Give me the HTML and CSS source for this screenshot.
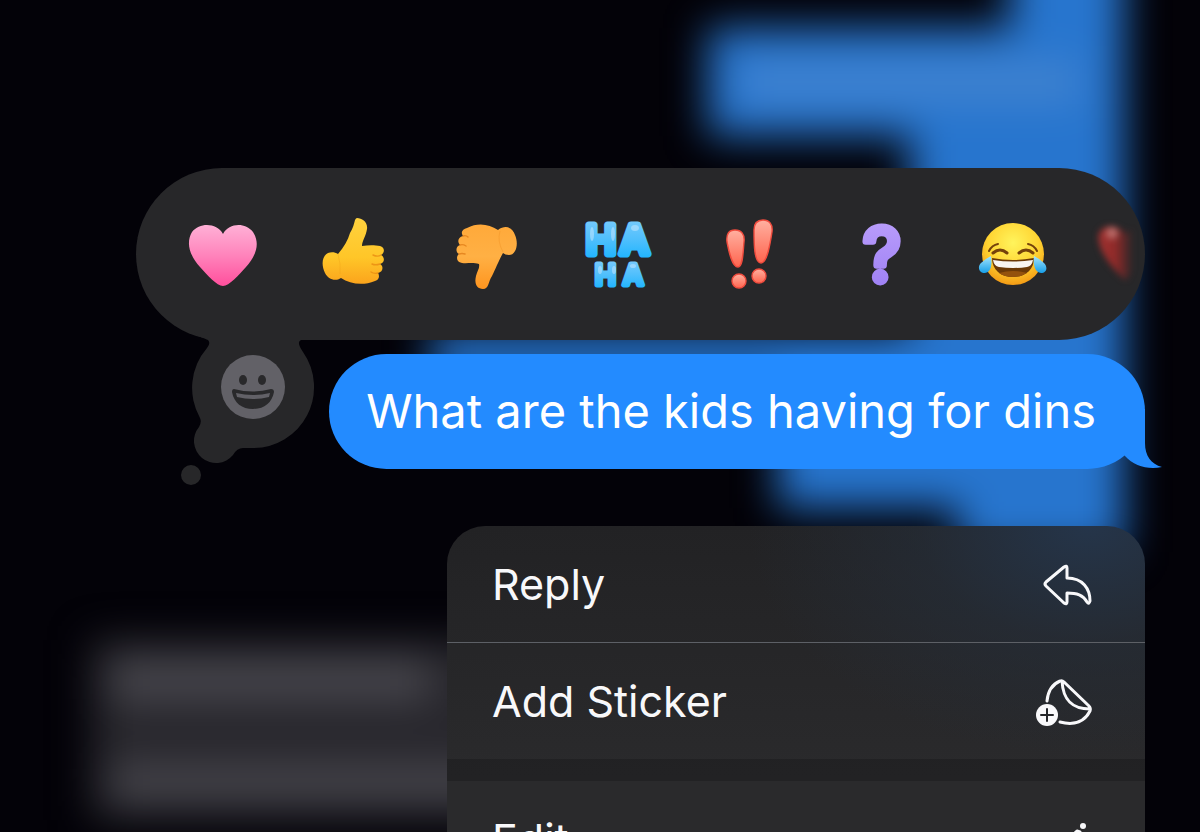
FILE: index.html
```html
<!DOCTYPE html>
<html lang="en">
<head>
    <meta charset="UTF-8">
    <meta name="viewport" content="width=device-width, initial-scale=1">
    <title>Messages</title>
    <link rel="stylesheet" href="styles.css">
</head>

<body>

<!-- Blurred conversation behind the overlay -->
<svg class="backdrop" viewBox="0 0 1200 832" preserveAspectRatio="xMaxYMin slice" aria-hidden="true">
    <defs>
        <filter id="blur" x="-20%" y="-20%" width="140%" height="140%" color-interpolation-filters="sRGB"><feGaussianBlur stdDeviation="20"/></filter>
    </defs>
    <g filter="url(#blur)">
        <path fill="#2775ce" d="M1010-80H1124V552H958V508H778V380H430V332H910V136H708V28H1010Z"/>
        <path fill="#3f82d0" d="M740 60H1080V104H740Z"/>
        <path fill="#28272d" d="M92 640H560V820H92Z"/>
        <path fill="#48474e" d="M110 660H430V700H110ZM110 766H520V800H110Z"/>
    </g>
</svg>

<main class="overlay">

    <!-- Reactions -->
    <section class="reactions" aria-label="Reactions">
        <div class="reaction-bar">
            <button type="button" class="reaction" aria-label="Heart">
                <svg viewBox="0 0 72 72">
                    <defs>
                        <linearGradient id="pink" x1="0" y1="0" x2="0" y2="1"><stop offset="0" stop-color="#ffb0d6"/><stop offset=".5" stop-color="#ff83bb"/><stop offset="1" stop-color="#ff4f9c"/></linearGradient>
                    </defs>
                    <path fill="url(#pink)" d="M37 16C43 5 59 4 67 14C75 26 69 39 60 49C53 57 43 68 37 68C31 68 21 57 14 49C5 39-1 26 6 14C14 4 31 5 37 16Z"/>
                </svg>
            </button>
            <button type="button" class="reaction" aria-label="Thumbs up">
                <svg viewBox="0 0 72 72">
                    <defs>
                        <linearGradient id="yellow" x1="0" y1="0" x2="0" y2="1"><stop offset="0" stop-color="#ffd23e"/><stop offset=".6" stop-color="#ffc628"/><stop offset="1" stop-color="#fba41c"/></linearGradient>
                    </defs>
                    <path fill="url(#yellow)" d="M39 0C44 0 50 4 49 11C48 18 44 23 44 28C50 27 57 27 62 28C67 29 67 35 63 37C67 39 67 45 62 46C66 48 65 54 60 55C62 58 61 62 57 63C45 68 32 66 23 60C17 64 10 61 7 55C3 47 4 38 10 35C13 34 17 34 20 36C26 29 30 22 32 15C35 10 36 6 37 2Q38 0 39 0Z"/>
                    <path fill="none" stroke="#e98b12" stroke-width="1.4" stroke-linecap="round" opacity=".8" d="M63 37C60 39 57 38 55 37M62 46C59 47 56 47 54 46M60 55Q56 56 53 54"/>
                    <path fill="none" stroke="#e99b18" stroke-width="1" opacity=".3" d="M20 36Q23 46 22 56"/>
                </svg>
            </button>
            <button type="button" class="reaction" aria-label="Thumbs down">
                <svg viewBox="0 0 72 72">
                    <defs>
                        <linearGradient id="orange" x1="0" y1="0" x2="0" y2="1"><stop offset="0" stop-color="#ffa93a"/><stop offset=".5" stop-color="#ffb044"/><stop offset="1" stop-color="#ff951f"/></linearGradient>
                    </defs>
                    <path fill="url(#orange)" d="M48 12C56 6 63 10 65 17C69 26 66 37 59 37Q55 37 53 35C48 44 46 50 42 58C38 64 39 71 33 71C27 71 24 66 26 58C27 53 30 50 29 46C22 44 17 46 12 45C6 44 6 38 9 36C5 34 6 28 10 27C7 24 8 19 13 18C10 14 13 11 17 10C28 4 39 6 48 12Z"/>
                    <path fill="none" stroke="#dd7813" stroke-width="1.4" stroke-linecap="round" opacity=".7" d="M13 18Q16 17 18 19M10 27Q13 26 16 28M9 36Q12 35 15 36"/>
                    <path fill="none" stroke="#e98517" stroke-width="1" opacity=".3" d="M50 13Q47 23 53 34"/>
                </svg>
            </button>
            <button type="button" class="reaction" aria-label="Haha">
                <svg viewBox="0 0 72 72">
                    <defs>
                        <linearGradient id="cyan" x1="0" y1="0" x2="0" y2="1"><stop offset="0" stop-color="#7fcdfd"/><stop offset=".5" stop-color="#4fbffc"/><stop offset="1" stop-color="#12b2ff"/></linearGradient>
                    </defs>
                    <g class="haha">
                        <text class="haha-big" x="4 38" y="36">HA</text>
                        <text class="haha-small" x="13 41" y="67">HA</text>
                    </g>
                    <g fill="#cdeaff" opacity=".5">
                        <ellipse cx="10" cy="16" rx="2" ry="7"/>
                        <ellipse cx="31" cy="16" rx="2" ry="7"/>
                        <ellipse cx="53" cy="10" rx="4" ry="3"/>
                        <ellipse cx="18" cy="52" rx="2" ry="4"/>
                        <ellipse cx="32" cy="52" rx="2" ry="4"/>
                        <ellipse cx="51" cy="48" rx="3" ry="2"/>
                    </g>
                </svg>
            </button>
            <button type="button" class="reaction" aria-label="Emphasize">
                <svg viewBox="0 0 72 72">
                    <defs>
                        <linearGradient id="coral" x1="0" y1="0" x2="0" y2="1"><stop offset="0" stop-color="#ffb0a0"/><stop offset="1" stop-color="#ff654f"/></linearGradient>
                    </defs>
                    <g fill="url(#coral)" stroke="#f04c3e" stroke-width="1.4">
                        <path d="M21 12C27 12 31 16 30 24C29 34 29 49 24 49C18 49 15 34 13 24C12 16 15 12 21 12Z"/>
                        <path d="M49 2C55 2 59 6 58 14C56 27 53 45 47 45C40 45 40 25 40 12C40 6 43 2 49 2Z"/>
                        <circle cx="25" cy="63" r="7"/>
                        <circle cx="45" cy="58" r="7"/>
                    </g>
                </svg>
            </button>
            <button type="button" class="reaction" aria-label="Question">
                <svg viewBox="0 0 72 72">
                    <defs>
                        <linearGradient id="violet" x1="0" y1="0" x2="0" y2="1"><stop offset="0" stop-color="#bda1fc"/><stop offset="1" stop-color="#9a7cf3"/></linearGradient>
                    </defs>
                    <text class="question" x="36" y="64" text-anchor="middle">?</text>
                </svg>
            </button>
            <button type="button" class="reaction" aria-label="Tears of joy">
                <svg viewBox="2 0 72 72">
                    <defs>
                        <radialGradient id="face" cx=".5" cy=".32" r=".68"><stop offset="0" stop-color="#fff45c"/><stop offset=".6" stop-color="#ffd432"/><stop offset="1" stop-color="#f39b15"/></radialGradient>
                        <linearGradient id="tear" x1="0" y1="0" x2="0" y2="1"><stop offset="0" stop-color="#a6e6ff"/><stop offset="1" stop-color="#179fe8"/></linearGradient>
                    </defs>
                    <circle cx="37" cy="36" r="31" fill="url(#face)"/>
                    <g fill="none" stroke="#75420b" stroke-linecap="round">
                        <path d="M13 33Q16 27 22 26M61 33Q58 27 52 26" stroke-width="2"/>
                        <path d="M17 35Q24 29 31 35M43 35Q50 29 57 35" stroke-width="3"/>
                    </g>
                    <path fill="#6a3908" d="M16 40Q37 44 58 40C58 52 49 59 37 59C25 59 16 52 16 40Z"/>
                    <path fill="#f8f5f2" d="M17 42Q37 45 57 42Q56 48 51 49Q37 51 23 49Q18 48 17 42Z"/>
                    <path fill="#94520d" d="M23 55Q37 51 51 55Q45 59 37 59Q28 59 23 55Z"/>
                    <path fill="url(#tear)" d="M15 38C16 45 16 54 9 55C3 55 1 49 5 45Q9 41 15 38ZM58 38C57 45 58 54 65 55C71 55 72 49 68 45Q64 41 58 38Z"/>
                </svg>
            </button>
            <button type="button" class="reaction" aria-label="Red heart">
                <svg viewBox="0 0 72 72">
                    <defs>
                        <filter id="soft" x="-30%" y="-30%" width="160%" height="160%" color-interpolation-filters="sRGB"><feGaussianBlur stdDeviation="3"/></filter>
                        <linearGradient id="red" x1="0" y1="0" x2="1" y2="0"><stop offset="0" stop-color="#a03230"/><stop offset=".5" stop-color="#902a29"/><stop offset="1" stop-color="#8f2928" stop-opacity=".1"/></linearGradient>
                    </defs>
                    <g filter="url(#soft)">
                        <path fill="url(#red)" d="M16 17C11 8-4 4-11 15C-15 31 4 52 15 62Q20 59 22 52V10Q18 13 16 17Z"/>
                        <circle cx="2" cy="15" r="6" fill="#c98580" opacity=".7"/>
                    </g>
                </svg>
            </button>
        </div>

        <button type="button" class="add-emoji" aria-label="Choose an emoji">
            <svg viewBox="0 0 152 160">
                <g fill="#272729">
                    <path d="M18 2L22 6Q30 9 32 10Q35 13 31 18A61 61 0 0 0 24 88Q26 92 23 97A21 21 0 1 0 57 125Q61 118 67 118H77A61 61 0 0 0 127 22Q120 12 125 10H128V2Z"/>
                    <circle cx="15" cy="145" r="10"/>
                </g>
                <circle cx="77" cy="57" r="32" fill="#626167"/>
                <g fill="#29292b">
                    <ellipse cx="67" cy="50" rx="4" ry="5"/>
                    <ellipse cx="86" cy="50" rx="4" ry="5"/>
                    <path d="M58 59Q77 64 95 59Q98 59 98 62C96 73 88 79 77 79C66 79 58 73 56 62Q56 59 58 59Z"/>
                </g>
                <path fill="#626167" d="M60 63Q77 67 94 63L93 67Q77 71 61 67Z"/>
            </svg>
        </button>
    </section>

    <!-- Selected message -->
    <div class="message">
        <p>What are the kids having for dins</p>
        <svg class="message-tail" viewBox="0 -20 54 60" aria-hidden="true">
            <path fill="#238bff" d="M10-20H36V14C36 27 42 35 53 38C39 41 25 37 16 27L10 20Z"/>
        </svg>
    </div>

    <!-- Context menu -->
    <nav class="menu" aria-label="Message actions">
        <button type="button" class="menu-item">
            Reply
            <svg class="menu-icon" viewBox="0 0 56 56">
                <path d="M10 30Q8 28 10 26L28 11Q31 9 31 12V22C47 22 54 33 54 45Q53 49 51 46C47 39 41 37 31 37V46Q31 49 28 47Z"/>
            </svg>
        </button>
        <button type="button" class="menu-item">
            Add Sticker
            <svg class="menu-icon" viewBox="0 0 56 56">
                <path d="M11 28C12 17 17 11 24 8Q26 7 28 9L53 33Q55 35 54 38C49 48 39 53 24 49M26 8C27 26 35 36 54 36"/>
                <circle cx="11" cy="42" r="11" fill="#f8f8fa" stroke="none"/>
                <path d="M5 42H17M11 36V48" stroke="#242529" stroke-width="2"/>
            </svg>
        </button>
        <div class="menu-gap"></div>
        <button type="button" class="menu-item">
            Edit
            <svg class="menu-icon" viewBox="0 0 56 56">
                <path d="M41 20L12 48L9 52L14 50L44 21Z"/>
                <circle cx="47" cy="15" r="3" fill="#f8f8fa" stroke="none"/>
            </svg>
        </button>
    </nav>
</main>

</body>
</html>
```
FILE: styles.css
```css
* {
    box-sizing: border-box;
}
body {
    margin: 0;
    height: 100vh;
    overflow: hidden;
    background-color: #030208;
    color: #f8f8fa;
    font-family: Inter, "Liberation Sans", sans-serif;
}
button {
    margin: 0;
    padding: 0;
    border: 0;
    background: none;
    color: inherit;
    font: inherit;
    cursor: pointer;
}
svg {
    display: block;
    overflow: visible;
}
.backdrop {
    position: absolute;
    top: 0;
    left: 0;
    width: 100%;
    height: 100%;
    overflow: hidden;
}
.overlay {
    position: relative;
    display: flex;
    flex-direction: column;
    align-items: flex-end;
    height: 100%;
    padding: 168px 55px 0 136px;
    overflow: hidden;
}

/* Reactions */
.reactions {
    position: relative;
    flex: none;
    width: 100%;
}
.reaction-bar {
    display: flex;
    height: 172px;
    padding-left: 20px;
    overflow: hidden;
    border-radius: 86px;
    background-color: #272729;
}
.reaction {
    display: flex;
    flex: none;
    align-items: center;
    justify-content: center;
    width: 132px;
}
.reaction svg {
    width: 72px;
    height: 72px;
}
.haha {
    fill: url(#cyan);
    stroke: url(#cyan);
    stroke-linejoin: round;
    font-family: Inter, sans-serif;
    font-weight: 600;
}
.haha-big {
    font-size: 40px;
    stroke-width: 7px;
}
.haha-small {
    font-size: 28px;
    stroke-width: 5px;
}
.question {
    fill: url(#violet);
    stroke: url(#violet);
    stroke-width: 7px;
    stroke-linejoin: round;
    font-family: Inter, sans-serif;
    font-size: 74px;
    font-weight: 400;
}
.add-emoji {
    position: absolute;
    top: 162px;
    left: 40px;
}
.add-emoji svg {
    width: 152px;
    height: 160px;
}

/* Message */
.message {
    position: relative;
    flex: none;
    margin-top: 14px;
    padding: 28px 49px 29px 37px;
    border-radius: 58px;
    background-color: #238bff;
    color: #fff;
    font-size: 47px;
    line-height: 58px;
}
.message p {
    margin: 0;
}
.message-tail {
    position: absolute;
    right: -18px;
    bottom: 0;
    width: 54px;
    height: 60px;
}

/* Menu */
.menu {
    flex: none;
    width: 100%;
    max-width: 698px;
    margin-top: 57px;
    overflow: hidden;
    border-radius: 38px 38px 0 0;
    background: radial-gradient(ellipse 340px 230px at 92% 0, #25354a, rgba(37, 46, 58, 0.6) 50%, transparent), linear-gradient(#222224, #2a2a2c 250px);
}
.menu-item {
    display: flex;
    align-items: center;
    justify-content: space-between;
    width: 100%;
    height: 116px;
    padding: 0 53px 0 45px;
    font-size: 43px;
}
.menu-item + .menu-item {
    height: 117px;
    border-top: 1px solid #5d6066;
}
.menu-gap {
    height: 22px;
    background-color: rgba(0, 0, 0, 0.18);
}
.menu-icon {
    width: 56px;
    height: 56px;
    fill: none;
    stroke: #f8f8fa;
    stroke-width: 3px;
    stroke-linecap: round;
    stroke-linejoin: round;
}
```
